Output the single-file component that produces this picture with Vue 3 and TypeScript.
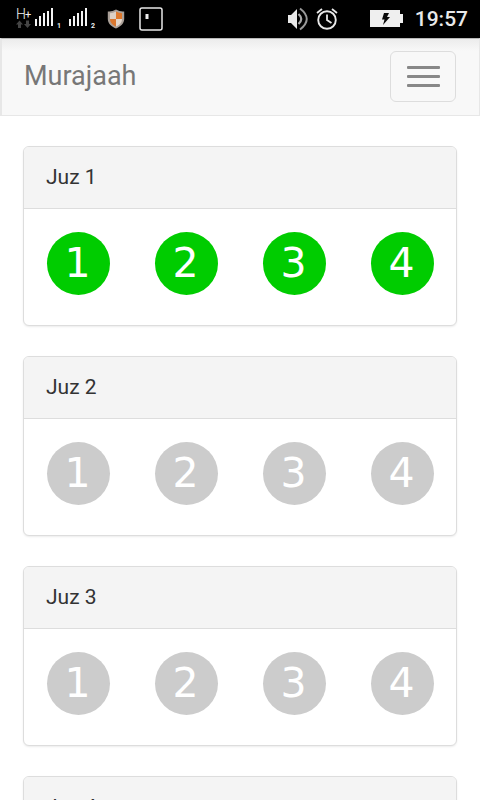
<script setup lang="ts">
import { ref } from 'vue'

interface Juz {
  id: number
  done: number[]
}

const quarters = [1, 2, 3, 4]
const list = ref<Juz[]>([
  { id: 1, done: [1, 2, 3, 4] },
  { id: 2, done: [] },
  { id: 3, done: [] },
  { id: 4, done: [] },
])

function toggle(juz: Juz, q: number) {
  juz.done = juz.done.includes(q) ? juz.done.filter((n) => n !== q) : [...juz.done, q]
}
</script>

<template>
  <div class="app">
    <div class="status">
      <div class="status-group">
        <svg class="signal" width="84" height="38" viewBox="0 0 84 38" aria-hidden="true">
          <text class="network" x="0" y="19">H</text>
          <text class="plus" x="9" y="18">+</text>
          <path d="M3.500 20.500l3.500 4h-2v3.500h-3v-3.500h-2zM11.500 28l-3.500-4h2v-3.500h3v3.500h2z" fill="#454545" />
          <path d="M19 19h2v7h-2zM23 16h2v10h-2zM27 13h2v13h-2zM31 11h2v15h-2zM35 8h2v18h-2z" fill="#f4f4f4" />
          <path d="M53 19h2v7h-2zM57 16h2v10h-2zM61 13h2v13h-2zM65 11h2v15h-2zM69 8h2v18h-2z" fill="#f4f4f4" />
          <text class="sim" x="41" y="28">1</text>
          <text class="sim" x="75" y="28">2</text>
        </svg>
        <svg class="shield" width="18" height="20" viewBox="0 0 18 20" aria-hidden="true">
          <path d="M9 .5Q5 3 .8 2.500V10c0 4.500 3.500 7.500 8.200 9.500 4.700-2 8.200-5 8.200-9.500V2.500Q13 3 9 .5z" fill="#aaa098" />
          <path d="M9 2.500Q6 4.200 3 4.200V10h6z" fill="#ddd0c4" />
          <path d="M9 2.500q3 1.700 6 1.700V10H9z" fill="#df782b" />
          <path d="M3 10h6v7.500C5.500 16 3 13.500 3 10z" fill="#d9762e" />
          <path d="M9 10h6c0 3.500-2.500 6-6 7.500z" fill="#e3d7cc" />
        </svg>
        <svg width="24" height="24" viewBox="0 0 24 24" aria-hidden="true">
          <rect x="1" y="1" width="22" height="22" rx="2" fill="none" stroke="#e8e8e8" stroke-width="1.500" />
          <path d="M6.500 7h3v5h-3z" fill="#eee" />
        </svg>
      </div>
      <div class="status-group">
        <svg class="sound" width="22" height="24" viewBox="0 0 22 24" aria-hidden="true">
          <path d="M1 8h3l6-6v20l-6-6H1z" fill="#e9e9e9" />
          <path d="M11.500 7q5.500 5 0 10" fill="none" stroke="#aaa" stroke-width="2.200" />
          <path d="M13 1.500q13.500 10.500 0 21" fill="none" stroke="#999" stroke-width="2" />
        </svg>
        <svg class="alarm" width="22" height="24" viewBox="0 0 22 24" aria-hidden="true">
          <circle cx="11" cy="13" r="8.800" fill="none" stroke="#e9e9e9" stroke-width="1.900" />
          <path d="M11 7.500V13l4.500 3M1 6l5-4M21 6l-5-4" fill="none" stroke="#e9e9e9" stroke-width="1.800" />
        </svg>
        <svg class="battery" width="33" height="18" viewBox="0 0 33 18" aria-hidden="true">
          <path d="M0 0h30v4h3v9h-3v4H0z" fill="#efefef" />
          <path d="M14 3h5l-2 4h3l-7 8 1.500-5.500H12z" fill="#0a0a0a" />
        </svg>
        <time class="clock">19:57</time>
      </div>
    </div>

    <header class="navbar">
      <a class="brand" href="#">Murajaah</a>
      <button class="menu" type="button" aria-label="Menu">
        <span class="bar"></span>
        <span class="bar"></span>
        <span class="bar"></span>
      </button>
    </header>

    <main class="content">
      <section v-for="juz in list" :key="juz.id" class="panel">
        <h2 class="panel-title">Juz {{ juz.id }}</h2>
        <div class="panel-body">
          <button
            v-for="q in quarters"
            :key="q"
            type="button"
            class="dot"
            :class="{ done: juz.done.includes(q) }"
            @click="toggle(juz, q)"
          >{{ q }}</button>
        </div>
      </section>
    </main>
  </div>
</template>

<style>
body {
  background: #fff;
}
</style>

<style scoped>
.app {
  display: flex;
  flex-direction: column;
  height: 100vh;
  font-family: Roboto, 'Liberation Sans', sans-serif;
  color: #333;
}

.app * {
  box-sizing: border-box;
}

.status {
  flex: none;
  display: flex;
  align-items: center;
  justify-content: space-between;
  height: 38px;
  padding: 0 12px 0 16px;
  background: #000;
}

.status-group {
  display: flex;
  align-items: center;
}

svg {
  display: block;
}

.network,
.plus,
.sim {
  fill: #f0f0f0;
  font-family: Roboto, sans-serif;
}

.network {
  font-size: 14px;
  font-weight: 300;
}

.plus {
  font-size: 11px;
}

.sim {
  font-size: 7px;
  font-weight: 700;
}

.shield {
  margin: 0 14px 0 7px;
}

.alarm {
  margin: 0 32px 0 7px;
}

.clock {
  margin-left: 12px;
  color: #e9e9e9;
  font-size: 21px;
  font-weight: 500;
  line-height: 38px;
}

.navbar {
  flex: none;
  display: flex;
  align-items: center;
  justify-content: space-between;
  height: 78px;
  padding: 0 23px 2px 22px;
  border: 1px solid #e7e7e7;
  border-left-width: 2px;
  border-top-color: #b9b9b9;
  background: linear-gradient(#ececec, #f8f8f8 12px);
}

.brand {
  color: #777;
  font-size: 27px;
  line-height: 30px;
  text-decoration: none;
}

.menu {
  display: flex;
  flex-direction: column;
  align-items: center;
  justify-content: center;
  gap: 6px;
  width: 66px;
  height: 51px;
  padding: 0;
  border: 1px solid #ddd;
  border-radius: 6px;
  background: transparent;
}

.bar {
  width: 33px;
  height: 3px;
  border-radius: 1px;
  background: #888;
}

.content {
  flex: 1;
  min-height: 0;
  overflow-y: auto;
  scrollbar-width: none;
  padding: 30px 23px 0;
}

.panel {
  margin-bottom: 30px;
  border: 1px solid #ddd;
  border-radius: 6px;
  background: #fff;
  box-shadow: 0 1px 2px rgba(0, 0, 0, 0.08);
}

.panel-title {
  margin: 0;
  padding: 15px 22px;
  border-bottom: 1px solid #ddd;
  border-radius: 5px 5px 0 0;
  background: #f4f4f4;
  font-size: 21px;
  font-weight: 400;
  line-height: 31px;
}

.panel-body {
  display: flex;
  justify-content: space-between;
  padding: 23px 22px 30px 23px;
}

.dot {
  width: 63px;
  height: 63px;
  padding: 0 2px 0 0;
  border: 0;
  border-radius: 50%;
  background: #ccc;
  color: #fff;
  font-family: 'DejaVu Sans', sans-serif;
  font-size: 41px;
  line-height: 63px;
  text-align: center;
}

.dot.done {
  background: #0c0;
}
</style>
